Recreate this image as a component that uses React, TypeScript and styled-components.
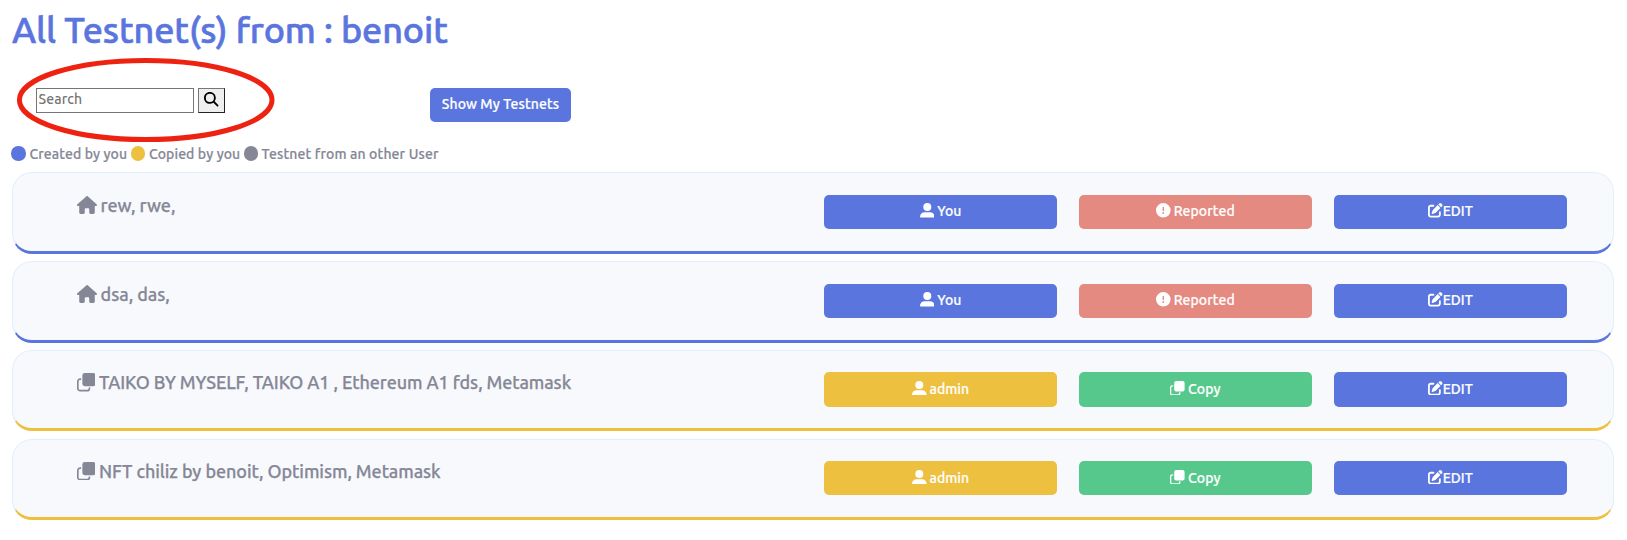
import React from 'react';
import styled, { createGlobalStyle } from 'styled-components';
import {
  FaHouse,
  FaCircleExclamation,
  FaPenToSquare,
  FaMagnifyingGlass,
} from 'react-icons/fa6';

const color = {
  blue: '#5a76de',
  yellow: '#edc040',
  green: '#56c88b',
  red: '#e48a81',
  gray: '#858796',
};

const GlobalStyle = createGlobalStyle`
  *, *::before, *::after { box-sizing: border-box; }
  body {
    margin: 0;
    background: #fff;
    color: ${color.gray};
    font-family: Ubuntu, 'Noto Sans', sans-serif;
    font-size: 14px;
    font-weight: 500;
  }
`;

const Page = styled.main`
  width: 1627px;
  height: 540px;
  padding: 0 13px 0 12px;
  overflow: hidden;
`;

const Title = styled.h1`
  margin: 0;
  height: 88px;
  padding-top: 7px;
  color: ${color.blue};
  font-size: 36px;
  font-weight: 500;
  line-height: 46px;
  white-space: nowrap;
  -webkit-text-stroke: 0.6px currentColor;
`;

const Toolbar = styled.div`
  position: relative;
  display: flex;
  align-items: flex-start;
  height: 55px;
  padding-left: 24px;
`;

const SearchForm = styled.div`
  display: flex;
  gap: 4px;
  width: 394px;
`;

const SearchInput = styled.input`
  width: 158px;
  height: 25px;
  padding: 0 2px 3px 1.5px;
  border: 1px solid #767676;
  border-radius: 0;
  color: #333;
  font: inherit;
  letter-spacing: 0.1px;
  outline: none;
  &::placeholder { color: #757575; opacity: 1; }
`;

const SearchButton = styled.button`
  display: flex;
  justify-content: center;
  width: 27px;
  height: 25px;
  padding: 3px 0 0;
  border: 1px solid;
  border-color: #767676 #222 #222 #767676;
  background: #efefef;
  color: #000;
  font-size: 14.5px;
`;

const Highlight = styled.svg`
  position: absolute;
  left: 4px;
  top: -31px;
  pointer-events: none;
`;

const Button = styled.button<{ $bg: string; $w: number; $gap?: number }>`
  display: flex;
  align-items: center;
  justify-content: center;
  gap: ${(p) => p.$gap ?? 0}px;
  width: ${(p) => p.$w}px;
  height: 34.2px;
  padding: 0 0 1.6px;
  border: 0;
  border-radius: 5px;
  background: ${(p) => p.$bg};
  color: #fff;
  font: inherit;
  line-height: 20px;
  white-space: nowrap;
  -webkit-text-stroke: 0.2px currentColor;
  svg { font-size: 14.6px; margin-bottom: 1px; }
`;

const Legend = styled.div`
  display: flex;
  align-items: center;
  height: 21px;
  margin-bottom: 8.4px;
  white-space: nowrap;
  -webkit-text-stroke: 0.2px currentColor;
`;

const LegendItem = styled.span<{ $w: number }>`
  display: flex;
  align-items: center;
  gap: 3.5px;
  width: ${(p) => p.$w}px;
`;

const Dot = styled.i<{ $c: string }>`
  flex: none;
  width: 14.5px;
  height: 14.5px;
  margin-left: -0.6px;
  border-radius: 50%;
  background: ${(p) => p.$c};
`;

const Row = styled.section<{ $accent: string }>`
  display: flex;
  justify-content: space-between;
  align-items: flex-start;
  height: 81.3px;
  margin-bottom: 7.55px;
  padding: 21.3px 46px 0 63.6px;
  border: 1px solid #e1f0fd;
  border-bottom: 3px solid ${(p) => p.$accent};
  border-radius: 20px;
  background: #f8f9fd;
`;

const RowTitle = styled.div`
  display: flex;
  align-items: center;
  gap: 4px;
  height: 20px;
  font-size: 18px;
  line-height: 20px;
  white-space: nowrap;
  -webkit-text-stroke: 0.25px currentColor;
`;

const Actions = styled.div`
  display: flex;
  gap: 22px;
`;

const Label = styled.span<{ $ls?: number }>`
  letter-spacing: ${(p) => p.$ls ?? 0}px;
`;

const CopyIcon = ({ size = '1em' }: { size?: number | string }) => (
  <svg width={size} height={size} viewBox="0 0 18 18" fill="currentColor">
    <rect x="5.2" y="0" width="12.8" height="12.8" rx="2.4" />
    <path
      d="M4 5.9H3A2.2 2.2 0 0 0 .8 8.1v6.9A2.2 2.2 0 0 0 3 17.2h6.9a2.2 2.2 0 0 0 2.2-2.2V14"
      fill="none"
      stroke="currentColor"
      strokeWidth="1.6"
    />
  </svg>
);

const UserIcon = () => (
  <svg width="1em" height="1em" viewBox="0 0 15 15" fill="currentColor">
    <circle cx="7.5" cy="4.1" r="4.1" />
    <path d="M4.7 9.5h5.6A4.7 4.7 0 0 1 15 14.2q0 .8-.8.8H.8q-.8 0-.8-.8A4.7 4.7 0 0 1 4.7 9.5z" />
  </svg>
);

type Testnet = { name: string; ls: number; mine: boolean };

const testnets: Testnet[] = [
  { name: 'rew, rwe,', ls: -0.05, mine: true },
  { name: 'dsa, das,', ls: -0.05, mine: true },
  { name: 'TAIKO BY MYSELF, TAIKO A1 , Ethereum A1 fds, Metamask', ls: -0.1, mine: false },
  { name: 'NFT chiliz by benoit, Optimism, Metamask', ls: -0.08, mine: false },
];

function TestnetRow({ name, ls, mine }: Testnet) {
  const accent = mine ? color.blue : color.yellow;
  return (
    <Row $accent={accent}>
      <RowTitle>
        {mine ? <FaHouse size={20} /> : <CopyIcon size={18.5} />}
        <Label $ls={ls}>{name}</Label>
      </RowTitle>
      <Actions>
        <Button $bg={accent} $w={233} $gap={3}>
          <UserIcon />
          <Label>{mine ? 'You' : 'admin'}</Label>
        </Button>
        <Button $bg={mine ? color.red : color.green} $w={233} $gap={3}>
          {mine ? <FaCircleExclamation /> : <CopyIcon />}
          <Label $ls={0.1}>{mine ? 'Reported' : 'Copy'}</Label>
        </Button>
        <Button $bg={color.blue} $w={233}>
          <FaPenToSquare />
          <Label>EDIT</Label>
        </Button>
      </Actions>
    </Row>
  );
}

export default function App() {
  return (
    <>
      <GlobalStyle />
      <Page>
        <Title><Label $ls={-0.14}>All Testnet(s) from : benoit</Label></Title>
        <Toolbar>
          <SearchForm>
            <SearchInput placeholder="Search" />
            <SearchButton aria-label="Search"><FaMagnifyingGlass /></SearchButton>
          </SearchForm>
          <Button $bg={color.blue} $w={141}><Label $ls={0.1}>Show My Testnets</Label></Button>
          <Highlight width="260" height="88" viewBox="0 0 260 88">
            <ellipse cx="129.7" cy="43" rx="126.3" ry="39.6" fill="none" stroke="#ee2211" strokeWidth="5" />
          </Highlight>
        </Toolbar>
        <Legend>
          <LegendItem $w={119.5}><Dot $c={color.blue} /><Label $ls={0.1}>Created by you</Label></LegendItem>
          <LegendItem $w={112.7}><Dot $c={color.yellow} /><Label $ls={0.1}>Copied by you</Label></LegendItem>
          <LegendItem $w={200}><Dot $c={color.gray} /><Label $ls={0.13}>Testnet from an other User</Label></LegendItem>
        </Legend>
        {testnets.map((t) => <TestnetRow key={t.name} {...t} />)}
      </Page>
    </>
  );
}
